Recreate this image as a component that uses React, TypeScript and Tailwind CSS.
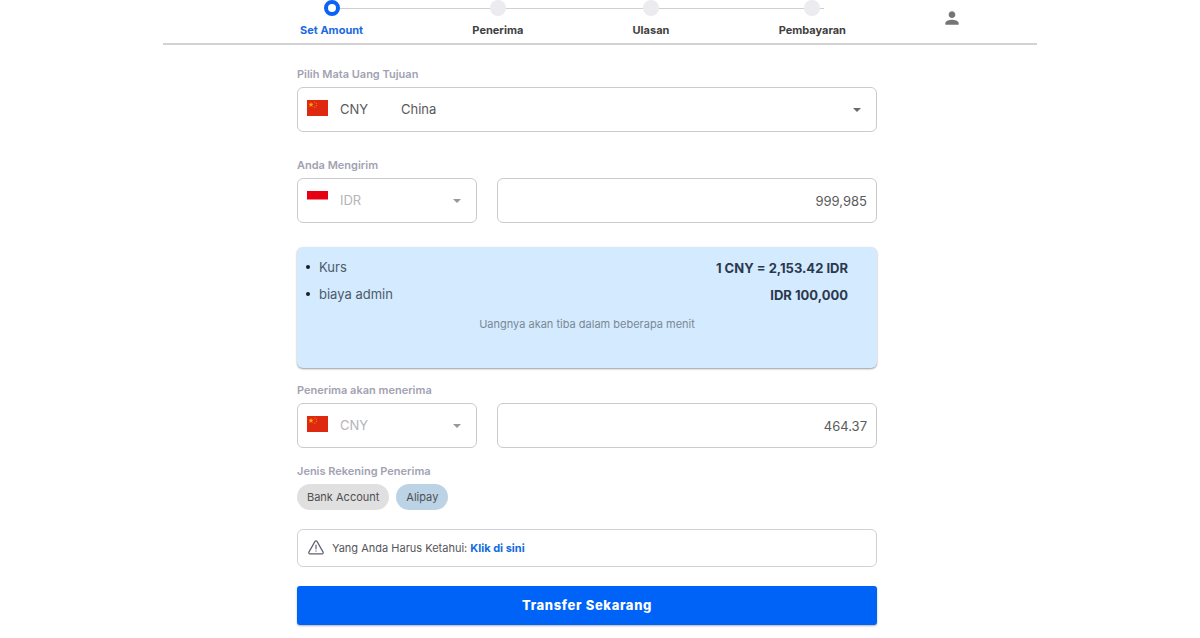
import type { ReactNode } from "react";

const steps = ["Set Amount", "Penerima", "Ulasan", "Pembayaran"];

function ChinaFlag() {
  return (
    <svg viewBox="0 0 21 16" className="mb-[3px] h-4 w-[21px] shrink-0" aria-hidden="true">
      <rect width="21" height="16" fill="#de2910" />
      <path
        d="M4 2l.65 1.85h1.95l-1.56 1.15.6 1.9L4 5.75 2.36 6.9l.6-1.9L1.4 3.85h1.95z"
        fill="#ffb400"
      />
      <g fill="#f58a00">
        <circle cx="7.8" cy="2" r=".6" />
        <circle cx="9.4" cy="3.6" r=".6" />
        <circle cx="9.4" cy="5.6" r=".6" />
        <circle cx="7.8" cy="7.2" r=".6" />
      </g>
    </svg>
  );
}

function IndonesiaFlag() {
  return (
    <svg viewBox="0 0 21 16" className="mb-[3px] h-4 w-[21px] shrink-0" aria-hidden="true">
      <rect width="21" height="16" fill="#fff" />
      <rect width="21" height="8.5" fill="#e70011" />
    </svg>
  );
}

function FieldLabel({ htmlFor, children }: { htmlFor: string; children: ReactNode }) {
  return (
    <label htmlFor={htmlFor} className="mb-1 block text-[11px] leading-[18px] font-semibold text-[#a2a2b2]">
      {children}
    </label>
  );
}

function CurrencySelect({
  id,
  flag,
  text,
  disabled = false,
  className = "",
}: {
  id: string;
  flag: ReactNode;
  text: string;
  disabled?: boolean;
  className?: string;
}) {
  return (
    <div className={`flex h-[45px] items-center rounded-md border border-[#cbcbce] pr-[15px] pl-[9px] ${className}`}>
      {flag}
      <select
        id={id}
        disabled={disabled}
        className="ml-3 h-full min-w-0 flex-1 appearance-none bg-transparent pt-px text-[13px] text-[#5a5a5c] opacity-100 outline-none disabled:text-[#b5b5b8]"
      >
        <option>{text}</option>
      </select>
      <svg
        viewBox="0 0 10 5"
        className={`h-1 w-2 shrink-0 ${disabled ? "text-[#98989a]" : "text-[#6a6a6c]"}`}
        aria-hidden="true"
      >
        <path d="M0 0h10L5 5z" fill="currentColor" />
      </svg>
    </div>
  );
}

function RateRow({ label, value }: { label: string; value: string }) {
  return (
    <li className="flex h-[27px] items-start justify-between">
      <span className="flex items-center gap-[9px] text-[#4d5a68]">
        <span className="size-1 rounded-full bg-[#16202b]" />
        {label}
      </span>
      <strong className="pt-px font-bold text-[#2b384d]">{value}</strong>
    </li>
  );
}

const amountClass =
  "h-[45px] min-w-0 flex-1 rounded-md border border-[#cbcbce] px-[9px] text-right text-[13px] text-[#5a5a5c] outline-none";

export default function App() {
  return (
    <div className="min-h-screen bg-white font-['Inter',sans-serif]">
      <div className="mx-auto w-full max-w-[874px]">
        <header className="flex h-[45px] justify-between border-b-2 border-[#d2d2d3] pr-[75px] pl-[137px]">
          <ol className="relative flex w-[546px] justify-between">
            <li aria-hidden="true" className="absolute top-2 right-[22px] left-8 h-px bg-[#d0d0d2]" />
            {steps.map((step, i) => (
              <li
                key={step}
                aria-current={i === 0 ? "step" : undefined}
                className="relative flex flex-col items-center gap-1.5"
              >
                <span
                  className={
                    i === 0
                      ? "size-4 rounded-full border-4 border-[#0b63f3] bg-white"
                      : "size-4 rounded-full bg-[#ebebf0]"
                  }
                />
                <span
                  className={`text-[11px] leading-4 font-bold ${i === 0 ? "text-[#1a6ae0]" : "text-[#3f3f42]"}`}
                >
                  {step}
                </span>
              </li>
            ))}
          </ol>
          <button type="button" aria-label="Akun" className="mt-2 size-5 text-[#757575]">
            <svg viewBox="0 0 24 24" className="size-5" fill="currentColor" aria-hidden="true">
              <path d="M12 12c2.21 0 4-1.79 4-4s-1.79-4-4-4-4 1.79-4 4 1.79 4 4 4zm0 2c-2.67 0-8 1.34-8 4v2h16v-2c0-2.66-5.33-4-8-4z" />
            </svg>
          </button>
        </header>

        <main className="pt-5 pr-[160px] pb-3 pl-[134px]">
          <FieldLabel htmlFor="destination">Pilih Mata Uang Tujuan</FieldLabel>
          <CurrencySelect
            id="destination"
            flag={<ChinaFlag />}
            text={"CNY\u00a0\u00a0\u00a0\u00a0\u00a0\u00a0\u00a0\u00a0\u00a0China"}
          />

          <div className="mt-6">
            <FieldLabel htmlFor="send-amount">Anda Mengirim</FieldLabel>
            <div className="flex gap-5">
              <CurrencySelect id="send-currency" flag={<IndonesiaFlag />} text="IDR" disabled className="w-[180px]" />
              <input id="send-amount" defaultValue="999,985" className={amountClass} />
            </div>
          </div>

          <section className="mt-6 h-[121px] rounded-md bg-[#d3eaff] pt-[7px] shadow-[0_1px_2px_rgba(0,0,0,0.4)]">
            <ul className="pr-[29px] pl-[9px] text-[13px] leading-[26px]">
              <RateRow label="Kurs" value="1 CNY = 2,153.42 IDR" />
              <RateRow label="biaya admin" value="IDR 100,000" />
            </ul>
            <p className="mt-2 text-center text-[11px] leading-4 text-[#7b8894]">
              Uangnya akan tiba dalam beberapa menit
            </p>
          </section>

          <div className="mt-[13px]">
            <FieldLabel htmlFor="receive-amount">Penerima akan menerima</FieldLabel>
            <div className="flex gap-5">
              <CurrencySelect id="receive-currency" flag={<ChinaFlag />} text="CNY" disabled className="w-[180px]" />
              <input id="receive-amount" defaultValue="464.37" className={amountClass} />
            </div>
          </div>

          <div role="group" aria-labelledby="account-type" className="mt-3.5">
            <p id="account-type" className="mb-1 text-[11px] leading-[18px] font-semibold text-[#a2a2b2]">
              Jenis Rekening Penerima
            </p>
            <div className="flex gap-[7px] text-[11px] text-[#4f4f52]">
              <button type="button" className="h-[26px] rounded-full bg-[#e0e0e0] px-2.5">
                Bank Account
              </button>
              <button type="button" className="h-[26px] rounded-full bg-[#bcd3e6] px-2.5">
                Alipay
              </button>
            </div>
          </div>

          <div className="mt-[19px] flex h-[38px] items-center gap-2 rounded-md border border-[#d2d2d6] px-2.5 text-[11px] text-[#55555a]">
            <svg
              viewBox="0 0 16 15"
              className="mb-0.5 h-[15px] w-4"
              fill="none"
              stroke="#5f6070"
              strokeWidth="1.2"
              strokeLinecap="round"
              strokeLinejoin="round"
              aria-hidden="true"
            >
              <path d="M7 1.4a1.15 1.15 0 0 1 2 0l6.1 10.7a1.15 1.15 0 0 1-1 1.7H1.9a1.15 1.15 0 0 1-1-1.7z" />
              <path d="M8 5.2v3.6M8 10.9v.2" />
            </svg>
            <p>
              Yang Anda Harus Ketahui:{" "}
              <a href="#info" className="font-bold text-[#0f6be0]">
                Klik di sini
              </a>
            </p>
          </div>

          <button
            type="button"
            className="mt-[19px] h-[39px] w-full rounded-[3px] bg-[#0063f8] text-[13px] font-extrabold tracking-wider text-white shadow-[0_1px_2px_rgba(0,0,0,0.3)]"
          >
            Transfer Sekarang
          </button>
        </main>
      </div>
    </div>
  );
}
